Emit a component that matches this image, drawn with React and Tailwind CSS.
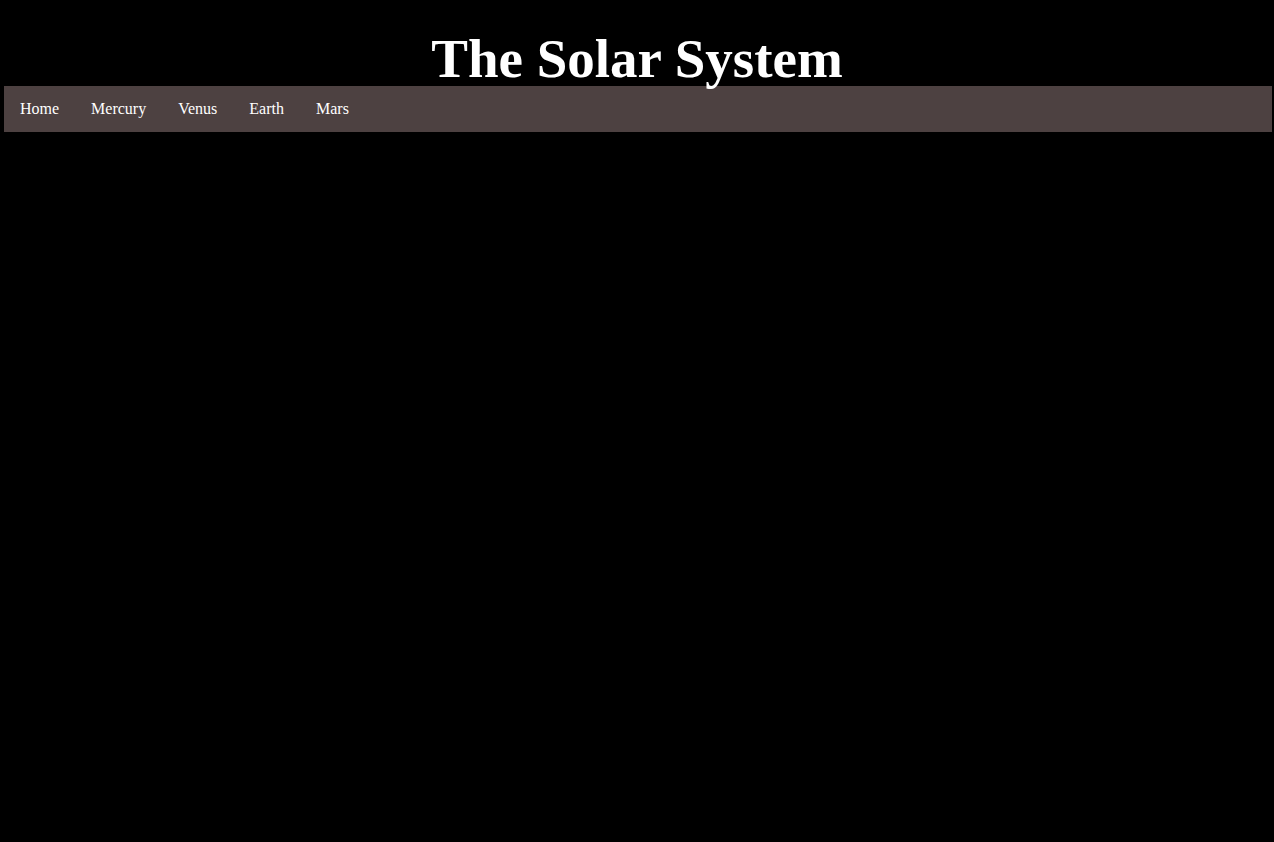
export default function App() {
  const links = ['Home', 'Mercury', 'Venus', 'Earth', 'Mars'];

  return (
    <div className="min-h-screen bg-black text-white font-['Liberation_Serif','Times_New_Roman',serif]">
      {/* Header */}
      <div className="pt-[32px]">
        <h1 className="text-center text-[55px] font-bold leading-[54px]">The Solar System</h1>
      </div>

      {/* Nav */}
      <nav className="ml-[4px] mr-[2px] flex bg-[#4d4141]">
        {links.map((link) => (
          <a key={link} href="#" className="block px-4 py-[14px] text-[16px] leading-[18px] text-white">
            {link}
          </a>
        ))}
      </nav>
    </div>
  );
}
